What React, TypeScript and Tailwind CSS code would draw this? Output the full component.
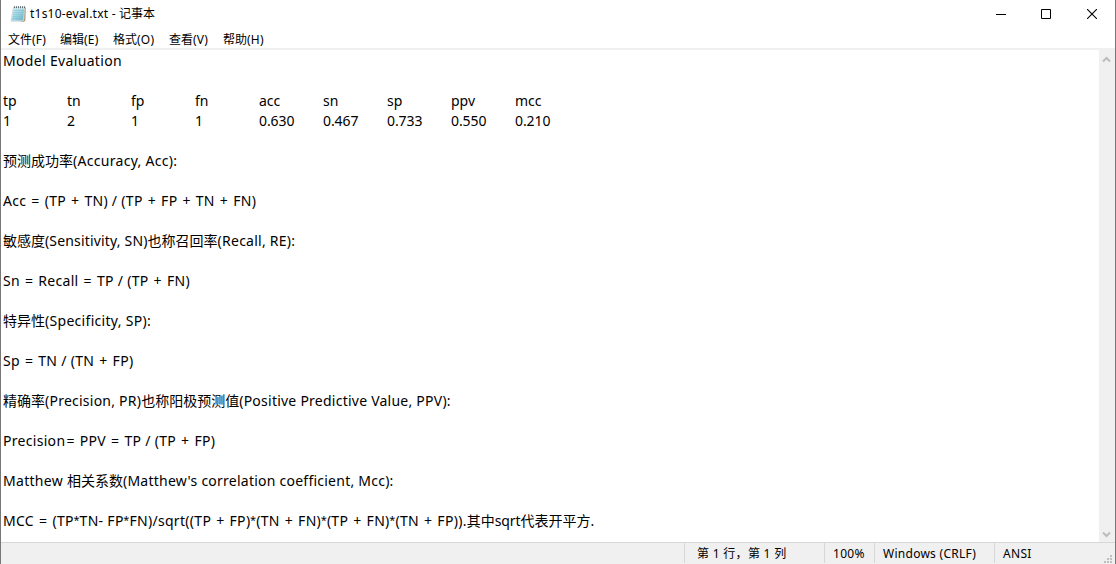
import { Fragment, type ReactNode } from "react";

function Formula({ children }: { children: string }) {
  return (
    <>
      {children.split(/([+=*])/).map((part, i) =>
        part === "+" || part === "=" ? (
          <span key={i} className="mx-[1.1px]">{part}</span>
        ) : part === "*" ? (
          <span key={i} className="mx-[-0.3px] align-[2px] text-[11px] leading-none">{part}</span>
        ) : (
          <Fragment key={i}>{part}</Fragment>
        ),
      )}
    </>
  );
}

function Cn({ children }: { children: ReactNode }) {
  return <span className="tracking-normal">{children}</span>;
}

const menus = [
  { label: "文件", key: "(F)", width: "w-[52px]" },
  { label: "编辑", key: "(E)", width: "w-[53px]" },
  { label: "格式", key: "(O)", width: "w-[56px]" },
  { label: "查看", key: "(V)", width: "w-[54px]" },
  { label: "帮助", key: "(H)", width: "w-[56px]" },
];

const header = ["tp", "tn", "fp", "fn", "acc", "sn", "sp", "ppv", "mcc"];
const values = ["1", "2", "1", "1", "0.630", "0.467", "0.733", "0.550", "0.210"];

const Gap = () => <div className="h-5" />;

function NotepadIcon() {
  return (
    <svg className="h-[18px] w-[18px]" viewBox="0 0 18 18" fill="none">
      <defs>
        <linearGradient id="page" x1="0" y1="0" x2="1" y2="1">
          <stop offset="0" stopColor="#cdeef6" />
          <stop offset="0.5" stopColor="#9dd3e2" />
          <stop offset="1" stopColor="#62adc4" />
        </linearGradient>
      </defs>
      <path d="M15.6 2.5h1.2l-.4 13.3-1.4.9H12z" fill="#b59a6d" />
      <path d="M4.5 2.2h11.4l-.9 12.8-1.2 1.2H2z" fill="#f1f5f5" stroke="#a3b1b5" strokeWidth=".5" />
      <path d="M4.7 3.4h10.5l-1 11.4-1 .8H2.8z" fill="url(#page)" />
      <path d="M4.4 5.5h10.4M4.1 7.5h10.5M3.8 9.5h10.6M3.5 11.5h10.8M3.2 13.5h10.8" stroke="#7fbed0" strokeWidth=".5" />
      <path d="M5.5 1.2v2M7.5 1.2v2M9.5 1.2v2M11.5 1.2v2M13.5 1.2v2M15.5 1.2v2" stroke="#59676c" strokeWidth=".9" />
    </svg>
  );
}

export default function App() {
  return (
    <div className="flex h-[564px] w-[1116px] flex-col overflow-hidden whitespace-pre border-x border-[#777777] bg-white font-['Noto_Sans','Noto_Sans_CJK_SC',sans-serif] text-black">
      <header className="flex h-7 shrink-0 items-center justify-between pl-2">
        <div className="flex items-center gap-[3px]">
          <NotepadIcon />
          <h1 className="text-[12px] leading-[18px] tracking-[0.22px]">
            t1s10-eval.txt - <Cn>记事本</Cn>
          </h1>
        </div>
        <div className="flex">
          <button aria-label="最小化" className="flex h-7 w-[46px] items-center justify-center">
            <svg width="10" height="10" shapeRendering="crispEdges"><path d="M0 5.5h10" stroke="#000" /></svg>
          </button>
          <button aria-label="最大化" className="flex h-7 w-[45px] items-center justify-center pr-px">
            <svg width="10" height="10"><path d="M.5.5h9v9h-9z" fill="none" stroke="#000" /></svg>
          </button>
          <button aria-label="关闭" className="flex h-7 w-[46px] items-center justify-center">
            <svg width="10" height="10"><path d="M0 0l10 10M10 0L0 10" stroke="#000" strokeWidth="1.1" /></svg>
          </button>
        </div>
      </header>
      <nav className="flex h-[22px] shrink-0 items-center border-b-2 border-[#f0f0f0] pl-[7px] pt-1 text-[12px] leading-[18px]">
        {menus.map((m) => (
          <span key={m.key} className={m.width}>
            {m.label}
            <span className="tracking-[0.2px]">{m.key}</span>
          </span>
        ))}
      </nav>
      <div className="flex min-h-0 flex-1">
        <main className="flex-1 pl-[2px] pt-px text-[14px] leading-5 tracking-[0.3px]">
          <div className="h-5 tracking-[0.34px]">Model Evaluation</div>
          <Gap />
          <div className="grid h-5 grid-cols-[repeat(9,64px)] tracking-normal">
            {header.map((h) => <span key={h}>{h}</span>)}
          </div>
          <div className="grid h-5 grid-cols-[repeat(9,64px)] tracking-[-0.1px]">
            {values.map((v, i) => <span key={i}>{v}</span>)}
          </div>
          <Gap />
          <div className="h-5"><Cn>预测成功率</Cn>(Accuracy, Acc):</div>
          <Gap />
          <div className="h-5"><Formula>Acc = (TP + TN) / (TP + FP + TN + FN)</Formula></div>
          <Gap />
          <div className="h-5"><Cn>敏感度</Cn><span className="tracking-[0.17px]">(Sensitivity, SN)</span><Cn>也称召回率</Cn><span className="tracking-[0.25px]">(Recall, RE):</span></div>
          <Gap />
          <div className="h-5"><Formula>Sn = Recall = TP / (TP + FN)</Formula></div>
          <Gap />
          <div className="h-5"><Cn>特异性</Cn>(Specificity, SP):</div>
          <Gap />
          <div className="h-5"><Formula>Sp = TN / (TN + FP)</Formula></div>
          <Gap />
          <div className="h-5"><Cn>精确率</Cn><span className="tracking-[0.24px]">(Precision, PR)</span><Cn>也称阳极预测值</Cn><span className="tracking-[0.24px]">(Positive Predictive Value, PPV):</span></div>
          <Gap />
          <div className="h-5"><Formula>Precision= PPV = TP / (TP + FP)</Formula></div>
          <Gap />
          <div className="h-5">{"Matthew "}<Cn>相关系数</Cn><span className="tracking-[0.24px]">(Matthew's correlation coefficient, Mcc):</span></div>
          <Gap />
          <div className="h-5"><Formula>MCC = (TP*TN- FP*FN)/sqrt((TP + FP)*(TN + FN)*(TP + FN)*(TN + FP)).</Formula><Cn>其中<span className="tracking-[-0.1px]">sqrt</span>代表开平方.</Cn></div>
        </main>
        <aside className="flex w-4 flex-col items-center justify-between bg-[#f0f0f0] pb-1 pt-1.5">
          <svg width="9" height="7" className="mr-0.5"><path d="M1 5.5l3.5-3.5L8 5.5" fill="none" stroke="#bcbcbc" strokeWidth="2" /></svg>
          <svg width="9" height="7" className="mr-0.5"><path d="M1 1.5L4.5 5 8 1.5" fill="none" stroke="#bcbcbc" strokeWidth="2" /></svg>
        </aside>
      </div>
      <footer className="flex h-[22px] shrink-0 justify-end border-t border-[#d7d7d7] bg-[#f0f0f0] pb-px text-[12px] leading-[22px]">
        <div className="w-[140px] border-l border-[#d7d7d7] pl-3 tracking-[0.3px]">第 1 行，第 1 列</div>
        <div className="w-[50px] border-l border-[#d7d7d7] pl-2 tracking-[0.3px]">100%</div>
        <div className="w-[120px] border-l border-[#d7d7d7] pl-2 tracking-[0.27px]">Windows (CRLF)</div>
        <div className="flex w-[121px] justify-between border-l border-[#d7d7d7] pl-2 tracking-[0.3px]">
          ANSI
          <svg width="10" height="8" viewBox="0 0 10 8" className="mr-px self-end" shapeRendering="crispEdges" fill="#bfbfbf">
            <path d="M6 0h2v2H6zM3 3h2v2H3zM6 3h2v2H6zM0 6h2v2H0zM3 6h2v2H3zM6 6h2v2H6z" />
          </svg>
        </div>
      </footer>
    </div>
  );
}
